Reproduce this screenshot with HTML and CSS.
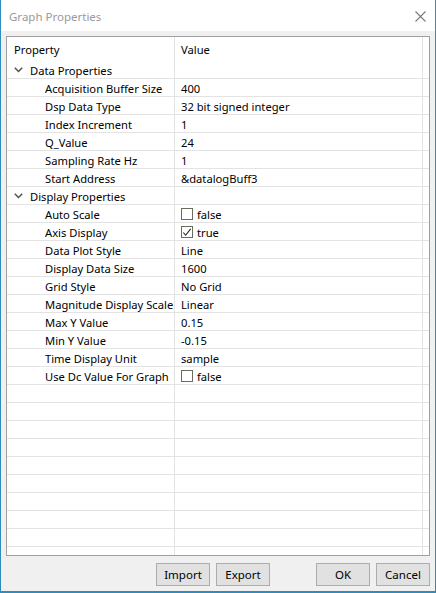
FILE: index.html
```html
<!DOCTYPE html>
<html>
<head>
<meta charset="utf-8">
<link rel="stylesheet" href="styles.css">
</head>
<body>
<div class="window">
  <div class="titlebar">
    <span class="title">Graph Properties</span>
    <svg class="close" width="11" height="11" viewBox="0 0 11 11"><path d="M0.5 0.5 L10.5 10.5 M10.5 0.5 L0.5 10.5" stroke="#7a7a7a" stroke-width="1.1" fill="none"/></svg>
  </div>
  <div class="content">
    <div class="grid">
      <div class="row header">
        <div class="c1"><span class="pad">Property</span></div>
        <div class="c2">Value</div>
        <div class="c3"></div>
      </div>
      <div class="row cat">
        <div class="c1"><svg class="chev" width="9" height="6" viewBox="0 0 9 6"><path d="M0.8 0.8 L4.5 4.5 L8.2 0.8" stroke="#505050" stroke-width="1.5" fill="none"/></svg>Data Properties</div>
        <div class="c2"></div><div class="c3"></div>
      </div>
      <div class="row"><div class="c1 item">Acquisition Buffer Size</div><div class="c2">400</div><div class="c3"></div></div>
      <div class="row"><div class="c1 item">Dsp Data Type</div><div class="c2">32 bit signed integer</div><div class="c3"></div></div>
      <div class="row"><div class="c1 item">Index Increment</div><div class="c2">1</div><div class="c3"></div></div>
      <div class="row"><div class="c1 item">Q_Value</div><div class="c2">24</div><div class="c3"></div></div>
      <div class="row"><div class="c1 item">Sampling Rate Hz</div><div class="c2">1</div><div class="c3"></div></div>
      <div class="row"><div class="c1 item">Start Address</div><div class="c2">&amp;datalogBuff3</div><div class="c3"></div></div>
      <div class="row cat">
        <div class="c1"><svg class="chev" width="9" height="6" viewBox="0 0 9 6"><path d="M0.8 0.8 L4.5 4.5 L8.2 0.8" stroke="#505050" stroke-width="1.5" fill="none"/></svg>Display Properties</div>
        <div class="c2"></div><div class="c3"></div>
      </div>
      <div class="row"><div class="c1 item">Auto Scale</div><div class="c2"><span class="check"></span>false</div><div class="c3"></div></div>
      <div class="row"><div class="c1 item">Axis Display</div><div class="c2"><span class="check"><svg width="11" height="11" viewBox="0 0 11 11"><path d="M1.5 5.5 L4 8.5 L9.5 1.5" stroke="#222" stroke-width="1.2" fill="none"/></svg></span>true</div><div class="c3"></div></div>
      <div class="row"><div class="c1 item">Data Plot Style</div><div class="c2">Line</div><div class="c3"></div></div>
      <div class="row"><div class="c1 item">Display Data Size</div><div class="c2">1600</div><div class="c3"></div></div>
      <div class="row"><div class="c1 item">Grid Style</div><div class="c2">No Grid</div><div class="c3"></div></div>
      <div class="row"><div class="c1 item">Magnitude Display Scale</div><div class="c2">Linear</div><div class="c3"></div></div>
      <div class="row"><div class="c1 item">Max Y Value</div><div class="c2">0.15</div><div class="c3"></div></div>
      <div class="row"><div class="c1 item">Min Y Value</div><div class="c2">-0.15</div><div class="c3"></div></div>
      <div class="row"><div class="c1 item">Time Display Unit</div><div class="c2">sample</div><div class="c3"></div></div>
      <div class="row"><div class="c1 item">Use Dc Value For Graph</div><div class="c2"><span class="check"></span>false</div><div class="c3"></div></div>
      <div class="row"><div class="c1"></div><div class="c2"></div><div class="c3"></div></div>
      <div class="row"><div class="c1"></div><div class="c2"></div><div class="c3"></div></div>
      <div class="row"><div class="c1"></div><div class="c2"></div><div class="c3"></div></div>
      <div class="row"><div class="c1"></div><div class="c2"></div><div class="c3"></div></div>
      <div class="row"><div class="c1"></div><div class="c2"></div><div class="c3"></div></div>
      <div class="row"><div class="c1"></div><div class="c2"></div><div class="c3"></div></div>
      <div class="row"><div class="c1"></div><div class="c2"></div><div class="c3"></div></div>
      <div class="row"><div class="c1"></div><div class="c2"></div><div class="c3"></div></div>
      <div class="row"><div class="c1"></div><div class="c2"></div><div class="c3"></div></div>
      <div class="row"><div class="c1"></div><div class="c2"></div><div class="c3"></div></div>
    </div>
    <div class="footer">
      <button class="btn">Import</button>
      <button class="btn">Export</button>
      <button class="btn sep">OK</button>
      <button class="btn">Cancel</button>
    </div>
  </div>
</div>
</body>
</html>
```
FILE: styles.css
```css
html, body {
  margin: 0;
  padding: 0;
}
body {
  width: 436px;
  height: 593px;
  overflow: hidden;
  font-family: "Noto Sans", "Liberation Sans", sans-serif;
  font-size: 11.2px;
  color: #000;
}
.window {
  box-sizing: border-box;
  width: 436px;
  height: 593px;
  border-left: 1px solid #2f8cbc;
  border-right: 1px solid #2f8cbc;
  border-bottom: 2px solid #2f8cbc;
  background: #f0f0f0;
  display: flex;
  flex-direction: column;
}
.titlebar {
  height: 31px;
  background: #fff;
  display: flex;
  align-items: center;
  justify-content: space-between;
  padding: 0 9px 0 8px;
}
.title {
  color: #999;
  font-size: 11.5px;
  padding-top: 1px;
}
.close {
  margin-top: 1px;
}
.content {
  padding: 5px 5px 0 5px;
}
.grid {
  box-sizing: border-box;
  height: 520px;
  border: 1px solid #a0a0a0;
  background: #fff;
  overflow: hidden;
}
.row {
  display: flex;
  height: 17px;
  border-bottom: 1px solid #e3e3e3;
  line-height: 17px;
  white-space: nowrap;
}
.row.header {
  height: 24px;
  line-height: 24px;
  border-bottom: none;
}
.c1 {
  width: 168px;
  border-right: 1px solid #e3e3e3;
  display: flex;
  align-items: center;
  overflow: hidden;
  padding-top: 1px;
  box-sizing: border-box;
}
.c2 {
  width: 248px;
  padding-left: 6px;
  border-right: 1px solid #e3e3e3;
  display: flex;
  align-items: center;
  overflow: hidden;
  padding-top: 1px;
  box-sizing: border-box;
}
.c3 {
  width: 5px;
}
.pad {
  padding-left: 7px;
}
.cat .c1 {
  padding-left: 7px;
}
.chev {
  margin-right: 7px;
}
.item {
  padding-left: 38px;
}
.check {
  box-sizing: border-box;
  width: 12px;
  height: 12px;
  border: 1px solid #6b6b5e;
  margin-right: 4px;
  display: inline-flex;
  align-items: center;
  justify-content: center;
  background: #fff;
}
.check svg {
  display: block;
}
.footer {
  display: flex;
  justify-content: flex-end;
  margin-top: 7px;
}
.btn {
  box-sizing: border-box;
  width: 54px;
  height: 23px;
  margin-left: 6px;
  padding: 0;
  background: #e1e1e1;
  border: 1px solid #adadad;
  font-family: "Noto Sans", "Liberation Sans", sans-serif;
  font-size: 11.5px;
  color: #000;
}
.btn.sep {
  margin-left: 46px;
}
```
